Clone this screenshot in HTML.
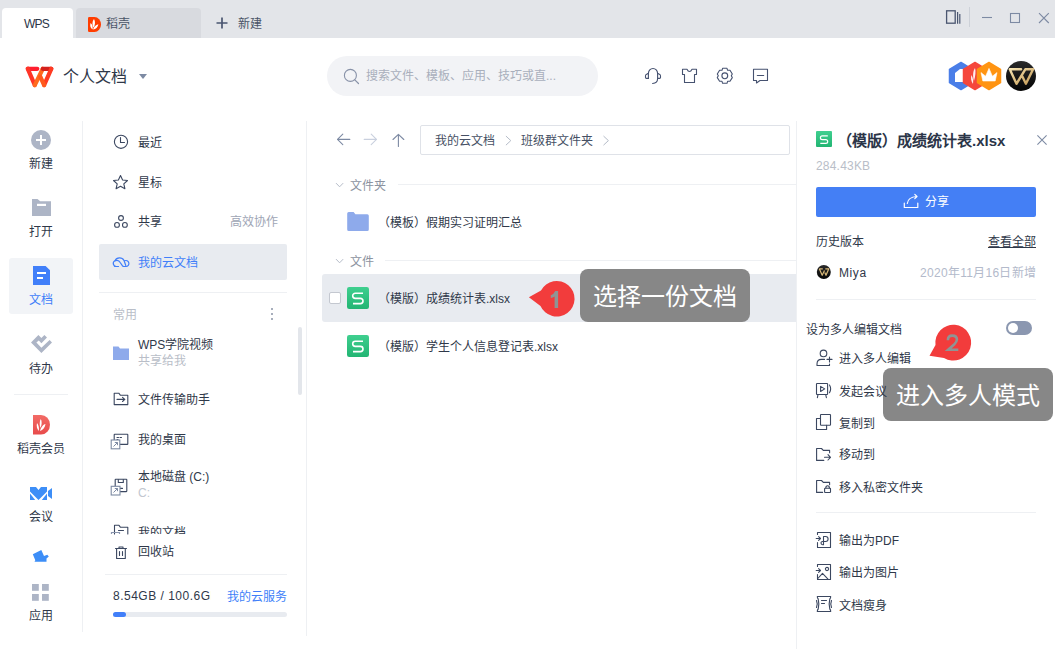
<!DOCTYPE html>
<html lang="zh-CN"><head><meta charset="utf-8">
<style>
*{margin:0;padding:0;box-sizing:border-box}
html,body{width:1055px;height:649px;overflow:hidden;background:#fff;font-family:"Liberation Sans",sans-serif;color:#2f3849;font-size:12px}
.a{position:absolute;white-space:nowrap}
.t{position:absolute;white-space:nowrap;line-height:16px;height:16px;margin-top:1px}
svg.ic{position:absolute;left:0;top:0;overflow:visible}
.k{fill:none;stroke:#3b4760;stroke-width:1.1;stroke-linecap:round;stroke-linejoin:round}
</style></head><body>
<!-- title bar -->
<div class="a" style="left:0;top:0;width:1055px;height:38px;background:#e3e5e9"></div>
<div class="a" style="left:2px;top:8px;width:71px;height:30px;background:#fff;border-radius:4px 4px 0 0"></div>
<div class="a" style="left:76px;top:8px;width:125px;height:30px;background:#d8dadf;border-radius:4px 4px 0 0"></div>
<div class="a" style="left:969px;top:7px;width:1px;height:20px;background:#cdd1d8"></div>

<!-- header -->
<div class="a" style="left:327px;top:56px;width:271px;height:40px;background:#f2f3f6;border-radius:20px"></div>

<!-- left nav -->
<div class="a" style="left:82px;top:121px;width:1px;height:511px;background:#eef0f3"></div>
<div class="a" style="left:9px;top:258px;width:64px;height:56px;background:#f2f4f7;border-radius:3px"></div>
<div class="a" style="left:14px;top:394px;width:54px;height:1px;background:#eef0f3"></div>

<!-- middle panel -->
<div class="a" style="left:306px;top:121px;width:1px;height:515px;background:#eef0f3"></div>
<div class="a" style="left:99px;top:244px;width:188px;height:36px;background:#e8ebf0;border-radius:2px"></div>
<div class="a" style="left:99px;top:292px;width:188px;height:1px;background:#eef0f3"></div>
<div class="a" style="left:105px;top:574px;width:182px;height:1px;background:#eef0f3"></div>
<div class="a" style="left:113px;top:612px;width:174px;height:5px;background:#e8ebf0;border-radius:3px"></div>
<div class="a" style="left:113px;top:612px;width:13px;height:5px;background:#417ff9;border-radius:3px"></div>
<div class="a" style="left:298px;top:327px;width:4px;height:68px;background:#e3e6eb;border-radius:2px"></div>

<!-- main -->
<div class="a" style="left:420px;top:125px;width:370px;height:30px;border:1px solid #dfe2e8;border-radius:2px"></div>
<div class="a" style="left:398px;top:184px;width:398px;height:1px;background:#eef0f3"></div>
<div class="a" style="left:385px;top:260px;width:411px;height:1px;background:#eef0f3"></div>
<div class="a" style="left:322px;top:274px;width:474px;height:48px;background:#e8ebf0;border-radius:3px 0 0 3px"></div>
<div class="a" style="left:329px;top:292px;width:12px;height:12px;background:#fff;border:1px solid #c4c8d0;border-radius:2px"></div>

<!-- right panel -->
<div class="a" style="left:796px;top:121px;width:1px;height:528px;background:#eef0f3"></div>
<div class="a" style="left:816px;top:187px;width:220px;height:30px;background:#447ff5;border-radius:2px"></div>
<div class="a" style="left:816px;top:299px;width:220px;height:1px;background:#eef0f3"></div>
<div class="a" style="left:1006px;top:321px;width:26px;height:14px;background:#8b97b0;border-radius:7px"></div>
<div class="a" style="left:1008px;top:323px;width:10px;height:10px;background:#fff;border-radius:5px"></div>
<div class="a" style="left:816px;top:512px;width:220px;height:1px;background:#eef0f3"></div>

<!-- ICONS -->
<svg class="ic" width="1055" height="649" viewBox="0 0 1055 649">
<defs>
<linearGradient id="gS" x1="0" y1="0" x2="0" y2="1"><stop offset="0" stop-color="#3fcf8f"/><stop offset="1" stop-color="#22b573"/></linearGradient>
<linearGradient id="gD" x1="0" y1="0" x2="0" y2="1"><stop offset="0" stop-color="#f26b66"/><stop offset="1" stop-color="#e84b4b"/></linearGradient>
<linearGradient id="gBlk" x1="0" y1="0" x2="0" y2="1"><stop offset="0" stop-color="#2a2a2a"/><stop offset="1" stop-color="#050505"/></linearGradient>
<linearGradient id="gGold" x1="0" y1="0" x2="1" y2="1"><stop offset="0" stop-color="#f5e2b0"/><stop offset="1" stop-color="#c49a55"/></linearGradient>
</defs>
<!-- tab daoke logo -->
<path d="M89.2,17 H94.5 A6.5,7.5 0 0 1 94.5,32 H89.2 Q88,32 88,30.8 V18.2 Q88,17 89.2,17 Z" fill="#ff3d00"/>
<path d="M94,19 C92,21.5 92.2,25.5 93.6,27.5 C95.3,25 95.5,21.5 94,19 Z M90.6,23 C89.6,25.5 90.4,28.2 92.6,29.6 C93,27 92.4,24.6 90.6,23 Z M98.4,24.2 C95.6,24.8 93.6,27 93.1,29.6 C95.8,29.2 97.8,27.2 98.4,24.2 Z" fill="#fff"/>
<!-- plus new -->
<path d="M216.5,23 H227.5 M222,17.5 V28.5" stroke="#4a5670" stroke-width="1.7" fill="none"/>
<!-- window controls -->
<rect x="946.6" y="10.8" width="8.6" height="12.4" fill="none" stroke="#4a5670" stroke-width="1.3"/>
<path d="M957.6,12 V23.8 M959.8,14 V23.8" stroke="#4a5670" stroke-width="1.2" fill="none"/>
<path d="M982,17.5 H992" stroke="#7d8aa3" stroke-width="1.1"/>
<rect x="1010.5" y="13.5" width="9" height="9" fill="none" stroke="#7d8aa3" stroke-width="1.1"/>
<path d="M1039,13.2 L1048.8,23 M1048.8,13.2 L1039,23" stroke="#7d8aa3" stroke-width="1.1"/>

<!-- WPS logo -->
<g transform="translate(25.5,66.5)" fill="none" stroke-linecap="round" stroke-linejoin="round" stroke-width="4.2">
<path d="M2.3,2.3 H11.8" stroke="#ff1f2f"/>
<path d="M2.3,2.3 L9.3,18.6" stroke="#ff3528"/>
<path d="M9.3,18.6 L17.3,2.3" stroke="#ff6a1e"/>
<path d="M17.3,2.3 H25.8" stroke="#d4201c"/>
<path d="M25.8,2.3 L18.6,18.6" stroke="#ff3b22"/>
<path d="M18.6,18.6 L14.8,10.2" stroke="#ff5a1c"/>
</g>
<path d="M139,74 H147 L143,79 Z" fill="#7d8aa3"/>
<!-- search -->
<circle cx="350.4" cy="75.4" r="6" fill="none" stroke="#8892a8" stroke-width="1.1"/>
<path d="M354.8,79.8 L358.5,83.5" stroke="#8892a8" stroke-width="1.2" stroke-linecap="round"/>
<!-- header icons -->
<g transform="translate(641,64)" class="k" style="stroke:#465270"><path d="M7.4,14.4 V9.5 A4.6,5 0 0 1 16.6,9.5 V14.5 Q16.6,19.3 11.6,19.5"/><path d="M7.4,9.2 L5.3,10.4 Q4.5,10.9 4.5,12 V13.6 Q4.5,14.4 5.4,14.4 H7.4"/><path d="M16.6,9.2 L18.7,10.4 Q19.5,10.9 19.5,12 V13.6 Q19.5,14.4 18.6,14.4 H16.6"/></g>
<g transform="translate(677,64)" class="k" style="stroke:#465270"><path d="M5.5,5.3 H10 Q11,7.5 12.5,7.5 Q14,7.5 15,5.3 H19.5 V10.5 H17.5 V18.5 H7.5 V10.5 H5.5 Z"/></g>
<g transform="translate(712,63)" class="k" style="stroke:#465270"><path d="M10.6,5.3 H15 L15.6,7.3 H18 L20.3,11 L19.3,12.8 L20.3,14.6 L18,18.3 H15.6 L15,20.3 H10.6 L10,18.3 H7.6 L5.3,14.6 L6.3,12.8 L5.3,11 L7.6,7.3 H10 Z"/><circle cx="12.8" cy="12.8" r="2.9"/></g>
<g transform="translate(748,63)" class="k" style="stroke:#465270"><path d="M5.5,6.3 H19.5 V17.5 H12 L8.5,20 V17.5 H5.5 Z"/><path d="M9.3,12.5 H15.7"/></g>
<!-- badges -->
<path d="M961,62.5 L972.5,69.3 V82.7 L961,89.5 L949.5,82.7 V69.3 Z" fill="#4a7ee8" stroke="#4a7ee8" stroke-width="1.5" stroke-linejoin="round"/>
<path d="M955,73 L960,69 H963 V82 H955 Z" fill="#fff"/>
<path d="M975,62.5 L986.5,69.3 V82.7 L975,89.5 L963.5,82.7 V69.3 Z" fill="#f5473c" stroke="#f5473c" stroke-width="1.5" stroke-linejoin="round"/>
<path d="M975,68 C973,71 972.5,76 974,81 C975.5,76 976,71 975,68 Z M971.5,75 C970.5,78 971,81 973,84 C973.5,81 973,78 971.5,75 Z" fill="#fff" opacity="0.9"/>
<path d="M989,62.5 L1000.5,69.3 V82.7 L989,89.5 L977.5,82.7 V69.3 Z" fill="#ff9412" stroke="#ff9412" stroke-width="1.5" stroke-linejoin="round"/>
<path d="M981,72.6 L985.6,76.2 L989,68.4 L992.4,76.2 L997,72.6 L995.2,81 H982.8 Z" fill="#fff" stroke="#fff" stroke-width="0.6" stroke-linejoin="round"/>
<circle cx="1021" cy="76" r="15" fill="url(#gBlk)"/>
<g transform="translate(1008.5,68)" fill="none" stroke="url(#gGold)" stroke-width="2.4" stroke-linejoin="round" stroke-linecap="round"><path d="M1.3,1.3 H12.6 M1.3,1.3 L8,15.8 L16.8,1.3 H24.6 L17.4,15.8 L13.9,8.6"/></g>

<!-- left nav icons -->
<circle cx="41" cy="140" r="10" fill="#adb5c6"/>
<path d="M36,140 H46 M41,135 V145" stroke="#fff" stroke-width="2"/>
<path d="M32,199 H37.5 L40.2,201.3 H51 V216 H32 Z" fill="#adb5c6"/>
<rect x="37" y="203.8" width="9" height="2.2" fill="#fff"/>
<path d="M33,266 H45.6 L50,270.3 V285 H33 Z" fill="#417ff9"/>
<rect x="37" y="272" width="9" height="2" fill="#fff"/>
<rect x="37" y="277" width="6" height="2" fill="#fff"/>
<g transform="translate(28,330)"><path d="M3,12.4 L10.4,5 L13.4,8 L16.4,5 L19,7.6 L13.4,13.2 L10.8,10.6 L8.4,12.6 L13.4,17.8 L21.6,10 L24,12.4 L13.4,23 Z" fill="#adb5c6"/></g>
<path d="M33,415 H41 A9,9.8 0 0 1 41,434.6 H33 Z" fill="url(#gD)"/>
<path d="M40.8,419 C39.5,421 39.3,425 40.5,428 C42,425 42,421 40.8,419 Z M37,423 C36.3,426 37,429 38.8,431 C39.3,428 38.8,425 37,423 Z M45.5,424 C43,424.5 40.8,427.5 40,431 C43,430 45,427.5 45.5,424 Z" fill="#fff"/>
<g fill="#3d8ef7"><path d="M30,487 H36 L38.5,490 L41,487 H47 V491.5 L38.5,500 L30,491.5 Z"/><path d="M30,493.6 L35.2,500 H30 Z"/><path d="M47,493.6 L41.8,500 H47 Z"/><path d="M48,491 L52,488 V499 L48,496 Z"/></g>
<path d="M32.8,554.3 L41.3,550 L44,556 L47.3,554.8 L48.8,556.5 L46.5,558.5 V561.8 H34.5 L35.3,560.2 Z" fill="#3d8ef7"/>
<g fill="#adb5c6"><rect x="32" y="584" width="6.8" height="6.8"/><rect x="42" y="584" width="6.8" height="6.8"/><rect x="32" y="594" width="6.8" height="6.8"/><rect x="42" y="594" width="6.8" height="6.8"/></g>

<!-- middle icons -->
<g class="k"><circle cx="121" cy="141.8" r="6.6"/><path d="M120.5,137.5 V142.5 H124.5"/></g>
<path class="k" d="M120.5,175.5 L122.6,180 L127.5,180.5 L123.8,183.8 L124.9,188.7 L120.5,186.2 L116.1,188.7 L117.2,183.8 L113.5,180.5 L118.4,180 Z"/>
<g class="k"><circle cx="121" cy="218" r="2.4"/><circle cx="117" cy="224.9" r="2.4"/><circle cx="124.9" cy="224.9" r="2.4"/></g>
<g transform="translate(113,257)" class="k" style="stroke:#417ff9;stroke-width:1.2"><path d="M5.5,9.5 H3.5 A3,3 0 0 1 2,3.8 A5,4.8 0 0 1 11,3.5 L12.8,8.5"/><path d="M2.2,3.8 A3.8,3.8 0 0 1 7.2,5.5 L9.5,8.8 Q10,9.5 11,9.5 H13 A3,3 0 1 0 11.6,3.8"/></g>
<g fill="#8a93a6"><circle cx="272" cy="309" r="1"/><circle cx="272" cy="314" r="1"/><circle cx="272" cy="319" r="1"/></g>
<path d="M113,346.5 H118.5 L120,348.5 H129 V360 H113 Z" fill="#8eaaeb"/>
<g class="k"><path d="M114.2,393.2 H118.8 L120.5,395.3 H127.8 V404.6 H114.2 Z"/><path d="M117,399.4 H124.8 M122.5,397.3 L124.8,399.4 L122.5,401.5"/></g>
<g class="k"><rect x="114.2" y="434.2" width="13.6" height="10.2" rx="0.5"/><path d="M117,437.5 H118.5 M120,437.5 H121.5 M117,439.5 H118"/></g>
<g><rect x="111.2" y="440" width="8.6" height="8.8" fill="#fff" stroke="#7d8aa3" stroke-width="1.1"/><path d="M113.5,446.5 L117.5,442.5 M114.8,442.5 H117.5 V445.2" fill="none" stroke="#7d8aa3" stroke-width="1"/></g>
<g class="k"><rect x="115.2" y="479.2" width="11.6" height="12.4" rx="0.5"/><path d="M118.3,479.5 V482.5 H123.3 V479.5 M120,488.4 H122.5"/></g>
<g><rect x="111.2" y="486.3" width="8.8" height="8.7" fill="#fff" stroke="#7d8aa3" stroke-width="1.1"/><path d="M113.5,492.5 L117.5,488.5 M114.8,488.5 H117.5 V491.2" fill="none" stroke="#7d8aa3" stroke-width="1"/></g>
<g class="k"><path d="M114.5,534 V525.3 H119 L120.5,527.3 H127.8 V534 M118.5,530.5 H123.5"/></g>
<path d="M111.5,534 V532.5 H119.5 V534" fill="none" stroke="#8a96ae" stroke-width="1.2"/>
<g class="k"><path d="M115.5,548.5 H126.5 M119,548.3 V547 H123 V548.3 M116.6,548.5 V558.5 H125.3 V548.5 M119.5,551.5 V555.5 M122.5,551.5 V555.5"/></g>

<!-- main icons -->
<g fill="none" stroke="#7d8aa3" stroke-width="1.1" stroke-linecap="round" stroke-linejoin="round"><path d="M337.5,139.4 H349.8 M342.8,134.2 L337.5,139.4 L342.8,144.6"/><path d="M393,139.5 L398.4,134.4 L403.8,139.5 M398.4,134.4 V146.5"/></g>
<path d="M364.2,139.4 H376.5 M371.2,134.2 L376.5,139.4 L371.2,144.6" fill="none" stroke="#c9d0de" stroke-width="1.1" stroke-linecap="round" stroke-linejoin="round"/>
<g fill="none" stroke="#b5bcc8" stroke-width="1" stroke-linecap="round" stroke-linejoin="round"><path d="M506.2,136.3 L510.8,140.6 L506.2,144.9"/><path d="M603.8,136.3 L608.4,140.6 L603.8,144.9"/><path d="M336.3,183.4 L339.6,186.8 L342.9,183.4"/><path d="M336.3,259.4 L339.6,262.8 L342.9,259.4"/></g>
<path d="M347.2,213.5 Q347.2,212 348.7,212 H353.6 L355.4,214.3 H367.3 Q368.8,214.3 368.8,215.8 V229.4 Q368.8,230.9 367.3,230.9 H348.7 Q347.2,230.9 347.2,229.4 Z" fill="#8eaaeb"/>
<rect x="347" y="287" width="22" height="22" rx="2.2" fill="url(#gS)"/>
<path d="M363,293.2 H355.3 A2.6,2.6 0 0 0 355.3,298.4 H360.4 A2.6,2.6 0 0 1 360.4,303.6 H353" fill="none" stroke="#fff" stroke-width="1.6"/>
<rect x="347" y="335" width="22" height="22" rx="2.2" fill="url(#gS)"/>
<path d="M363,341.2 H355.3 A2.6,2.6 0 0 0 355.3,346.4 H360.4 A2.6,2.6 0 0 1 360.4,351.6 H353" fill="none" stroke="#fff" stroke-width="1.6"/>

<!-- right panel icons -->
<rect x="816" y="131" width="16" height="16" rx="1" fill="url(#gS)"/>
<path d="M827.8,135.8 H822.3 A1.9,1.9 0 0 0 822.3,139.6 H825.8 A1.9,1.9 0 0 1 825.8,143.4 H820.3" fill="none" stroke="#fff" stroke-width="1.2"/>
<path d="M1037.4,135.4 L1046.6,144.6 M1046.6,135.4 L1037.4,144.6" stroke="#7d8aa3" stroke-width="1.1"/>
<g fill="none" stroke="#fff" stroke-width="1.2" stroke-linecap="round" stroke-linejoin="round"><path d="M904.3,203 V207.5 H917.8 V203"/><path d="M907.3,203.5 Q908,197 916.8,196.5 M914.8,194.4 L917,196.5 L914.8,198.6"/></g>
<circle cx="823.8" cy="272" r="7" fill="url(#gBlk)"/>
<path d="M819.3,268.8 H822.8 M819.3,268.8 L822.2,275.3 L824.5,270.5 M825.3,268.8 H828.8 L826,275.3 L824.8,272.5" fill="none" stroke="#d8b878" stroke-width="1.2" stroke-linejoin="round"/>
<g class="k">
<g transform="translate(812,346)"><circle cx="11.5" cy="7.4" r="3.3"/><path d="M12.5,13.4 H9.5 Q5,13.4 5,18 V19.5 H17.5 V18"/><path d="M17.5,11 V16 M15,13.4 H20"/></g>
<g transform="translate(812,379)"><rect x="4.5" y="4.5" width="11.1" height="11" rx="0.6"/><path d="M8.6,7.4 L12.7,9.9 L8.6,12.5 Z"/><path d="M17.5,6 Q19.8,9.9 17.5,13.7"/><path d="M6,15.7 L5.4,18.6 M13.7,15.7 L14.4,18.6"/></g>
<g transform="translate(812,410)"><path d="M8.4,8.5 H4.5 V19.5 H14.6 V15.3"/><rect x="8.5" y="4.5" width="10" height="10.8" rx="0.6"/></g>
<g transform="translate(812,442)"><path d="M11.8,18.4 H4.6 V6.5 H9.5 L11.3,8.4 H17.6 V10.7"/><path d="M12.5,15.3 H18.5 M16,12.6 L18.5,15.3 L16,18"/></g>
<g transform="translate(812,474)"><path d="M10.6,18.4 H4.6 V6.5 H9.5 L11.3,8.4 H17.6 V10.7"/><rect x="12.6" y="14.2" width="5.9" height="4.3" rx="0.6"/><path d="M13.8,14 A1.8,2.2 0 0 1 17.4,14"/></g>
<g transform="translate(812,528)"><path d="M5.5,6.5 V4.5 H18.5 V19.5 H5.5 V14.5"/><path d="M4.2,10.5 H8.3 M6.6,8.6 L8.5,10.5 L6.6,12.4"/><path d="M11.5,13.5 V8.5 H13.6 A2.5,2.5 0 0 1 13.6,13.5 H10.6 A1.6,1.6 0 0 0 10.6,16.7 H11.5 V13.5"/></g>
<g transform="translate(812,560)"><path d="M5.5,6.5 V4.5 H18.5 V19.5 H5.5 V14.5"/><path d="M4.2,10.5 H8.3 M6.6,8.6 L8.5,10.5 L6.6,12.4"/><circle cx="15" cy="9" r="1.6"/><path d="M5.8,18.5 L10.5,13.3 L16,19.2"/></g>
<g transform="translate(812,592)"><path d="M5.3,4.5 H18.7 Q18.8,6 17.8,7 Q16.5,12 17.8,17 Q18.8,18 18.7,19.5 H5.3 Q5.2,18 6.2,17 Q7.5,12 6.2,7 Q5.2,6 5.3,4.5 Z"/><path d="M4.5,8.5 Q6,12 4.5,15.5 M19.5,8.5 Q18,12 19.5,15.5"/><path d="M9.5,8.5 H14.5 M9.5,11.5 H12.5"/></g>
</g>
</svg>

<!-- TEXT -->
<div class="t" style="left:24px;top:15px;letter-spacing:-0.8px;color:#2b3548">WPS</div>
<div class="t" style="left:106px;top:15px;color:#4a5467">稻壳</div>
<div class="t" style="left:238px;top:15px;color:#4a5467">新建</div>
<div class="t" style="left:63px;top:67px;font-size:16px;line-height:18px;height:18px">个人文档</div>
<div class="t" style="left:366px;top:67px;color:#a9afbc">搜索文件、模板、应用、技巧或直...</div>

<div class="t" style="left:29px;top:155px">新建</div>
<div class="t" style="left:29px;top:223px">打开</div>
<div class="t" style="left:29px;top:291px;color:#417ff9">文档</div>
<div class="t" style="left:29px;top:360px">待办</div>
<div class="t" style="left:17px;top:440px">稻壳会员</div>
<div class="t" style="left:29px;top:508px">会议</div>
<div class="t" style="left:29px;top:607px">应用</div>

<div class="t" style="left:138px;top:134px">最近</div>
<div class="t" style="left:138px;top:174px">星标</div>
<div class="t" style="left:138px;top:213px">共享</div>
<div class="t" style="left:230px;top:213px;color:#9ea5b5">高效协作</div>
<div class="t" style="left:138px;top:254px;color:#417ff9">我的云文档</div>
<div class="t" style="left:113px;top:306px;color:#b9bec8">常用</div>
<div class="t" style="left:138px;top:336px">WPS学院视频</div>
<div class="t" style="left:138px;top:352px;color:#b9bec8">共享给我</div>
<div class="t" style="left:138px;top:391px">文件传输助手</div>
<div class="t" style="left:138px;top:431px">我的桌面</div>
<div class="t" style="left:138px;top:468px">本地磁盘 (C:)</div>
<div class="t" style="left:138px;top:484px;color:#c2c7d0">C:</div>
<div class="a" style="left:105px;top:520px;width:190px;height:14px;overflow:hidden"><div class="t" style="left:33px;top:4px">我的文档</div></div>
<div class="t" style="left:138px;top:543px">回收站</div>
<div class="a" style="left:113px;top:587px;width:98px;height:17px;overflow:hidden"><div class="t" style="left:0;top:0;letter-spacing:0.5px">8.54GB / 100.6GB</div></div>
<div class="t" style="left:227px;top:588px;color:#417ff9">我的云服务</div>

<div class="t" style="left:435px;top:132px;color:#465064">我的云文档</div>
<div class="t" style="left:521px;top:132px;color:#465064">班级群文件夹</div>
<div class="t" style="left:350px;top:177px;color:#8c93a0">文件夹</div>
<div class="t" style="left:350px;top:253px;color:#8c93a0">文件</div>
<div class="t" style="left:378px;top:214px">（模板）假期实习证明汇总</div>
<div class="t" style="left:378px;top:290px">（模版）成绩统计表.xlsx</div>
<div class="t" style="left:378px;top:338px">（模版）学生个人信息登记表.xlsx</div>

<div class="t" style="left:837px;top:131px;font-size:15px;line-height:18px;height:18px;font-weight:bold;color:#2b3548">（模版）成绩统计表.xlsx</div>
<div class="t" style="left:816px;top:157px;color:#b9bec8;letter-spacing:0.2px">284.43KB</div>
<div class="t" style="left:925px;top:193px;color:#fff">分享</div>
<div class="t" style="left:816px;top:233px">历史版本</div>
<div class="t" style="left:988px;top:233px;text-decoration:underline">查看全部</div>
<div class="t" style="left:839px;top:264px;letter-spacing:0.6px">Miya</div>
<div class="t" style="left:920px;top:264px;color:#b3bacb;letter-spacing:0.3px">2020年11月16日新增</div>
<div class="t" style="left:806px;top:321px">设为多人编辑文档</div>
<div class="t" style="left:839px;top:350px">进入多人编辑</div>
<div class="t" style="left:839px;top:415px">复制到</div>
<div class="t" style="left:839px;top:446px">移动到</div>
<div class="t" style="left:839px;top:479px">移入私密文件夹</div>
<div class="t" style="left:839px;top:532px">输出为PDF</div>
<div class="t" style="left:839px;top:564px">输出为图片</div>
<div class="t" style="left:839px;top:597px">文档瘦身</div>

<!-- markers & tooltips -->
<svg class="ic" width="1055" height="649" viewBox="0 0 1055 649">
<path d="M528.9,297.3 L541,290.5 A17.8,17.8 0 1 1 540.5,306 Z" fill="#f23c3c"/>
<path d="M929.5,355.7 L935.5,345 A17.9,17.9 0 1 1 944,358 Z" fill="#f23c3c"/>
</svg>
<svg class="ic" width="1055" height="649"><path d="M550.8,295.3 Q554,294 555.2,291 H558.1 V308.1 H554.6 V296.4 Q552.8,297.6 550.8,298.1 Z" fill="#8f9494"/><path d="M947.9,340.2 Q947.9,335.6 952.3,335.6 Q956.9,335.6 956.9,339.6 Q956.9,342 954.1,344.6 L948.2,349.7 H958.3" fill="none" stroke="#8f9494" stroke-width="2.6" stroke-linejoin="miter"/></svg>

<div class="a" style="left:580px;top:269px;width:170px;height:53px;background:#878787;border-radius:8px"></div>
<div class="t" style="left:593px;top:283px;font-size:24px;line-height:26px;height:26px;color:#fff">选择一份文档</div>
<div class="a" style="left:883px;top:368px;width:170px;height:53px;background:#878787;border-radius:8px"></div>
<div class="t" style="left:896px;top:382px;font-size:24px;line-height:26px;height:26px;color:#fff">进入多人模式</div>
<div class="t" style="left:839px;top:383px">发起会议</div>
</body></html>
